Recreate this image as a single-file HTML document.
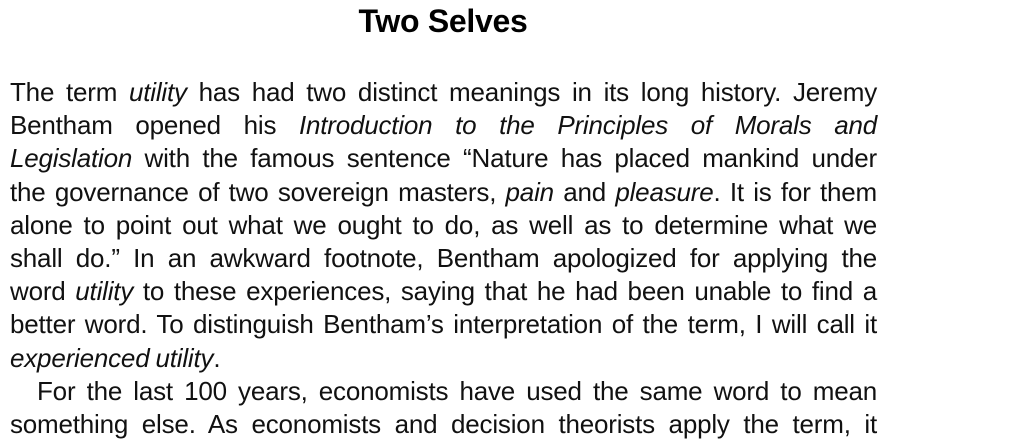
<!DOCTYPE html>
<html><head><meta charset="utf-8"><style>
html,body{margin:0;padding:0;background:#fff;width:1024px;height:445px;overflow:hidden}
body{font-family:"Liberation Sans",Arial,sans-serif;color:#111;position:relative}
h1{position:absolute;left:0;width:886px;top:0;margin:0;text-align:center;font-size:32px;font-weight:bold;line-height:42px;letter-spacing:-0.3px;color:#000}
.t{position:absolute;left:10px;width:867px;top:76px}
.l{height:33.2px;line-height:33.2px;font-size:26px;letter-spacing:-0.2px;word-spacing:-3px;text-align:justify;text-align-last:justify;white-space:nowrap}
.n{text-align-last:left;word-spacing:-1px}
.i{padding-left:27px}
</style></head><body>
<h1>Two Selves</h1>
<div class="t">
<div class="l">The term <i>utility</i> has had two distinct meanings in its long history. Jeremy</div>
<div class="l">Bentham opened his <i>Introduction to the Principles of Morals and</i></div>
<div class="l"><i>Legislation</i> with the famous sentence “Nature has placed mankind under</div>
<div class="l">the governance of two sovereign masters, <i>pain</i> and <i>pleasure</i>. It is for them</div>
<div class="l">alone to point out what we ought to do, as well as to determine what we</div>
<div class="l">shall do.” In an awkward footnote, Bentham apologized for applying the</div>
<div class="l">word <i>utility</i> to these experiences, saying that he had been unable to find a</div>
<div class="l">better word. To distinguish Bentham’s interpretation of the term, I will call it</div>
<div class="l n"><i>experienced utility</i>.</div>
<div class="l i">For the last 100 years, economists have used the same word to mean</div>
<div class="l">something else. As economists and decision theorists apply the term, it</div>
</div>
</body></html>
